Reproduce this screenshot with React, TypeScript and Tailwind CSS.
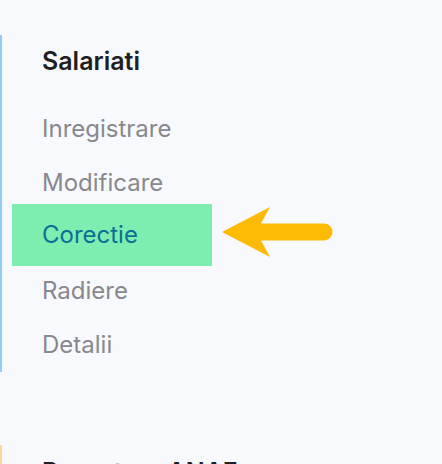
const items = ["Inregistrare", "Modificare", "Corectie", "Radiere", "Detalii"];

function Arrow() {
    return (
        <svg width="116" height="54" viewBox="0 0 116 54" className="ml-[8px] shrink-0 self-start">
            <path
                d="M2 28 L50 3 L41 19.5 L104 19.5 A8.5 8.5 0 0 1 104 36.5 L41 36.5 L50 53 Z"
                fill="#fbbb05"
            />
        </svg>
    );
}

export default function App() {
    return (
        <main
            className="h-[464px] w-[442px] overflow-hidden bg-[#f8f9fd]"
            style={{ fontFamily: "Inter, 'Noto Sans', sans-serif" }}
        >
            <div className="h-[35px]" />
            <section className="border-l-2 border-[#93cbfa] pl-[10px] pt-[10px]">
                <h2 className="mb-[25px] pl-[30px] text-[25px] leading-[32px] font-semibold text-[#1f1f23]">
                    Salariati
                </h2>
                <ul>
                    {items.map((item) =>
                        item === "Corectie" ? (
                            <li key={item} className="-mt-[6px] -mb-[2px] flex items-center">
                                <div className="flex h-[62px] w-[200px] items-center bg-[#7eedb0] pl-[30px] text-[24px] text-[#0b6f96]">
                                    {item}
                                </div>
                                <Arrow />
                            </li>
                        ) : (
                            <li
                                key={item}
                                className="flex h-[54px] items-center pl-[30px] text-[24px] text-[#88888d]"
                            >
                                {item}
                            </li>
                        ),
                    )}
                </ul>
            </section>
            <div className="h-[73px]" />
            <section className="border-l-2 border-[#ffd79a] pl-[10px] pt-[11px]">
                <h2 className="pl-[30px] text-[25px] leading-[32px] font-semibold text-[#1f1f23]">
                    Raportare ANAF
                </h2>
            </section>
        </main>
    );
}
